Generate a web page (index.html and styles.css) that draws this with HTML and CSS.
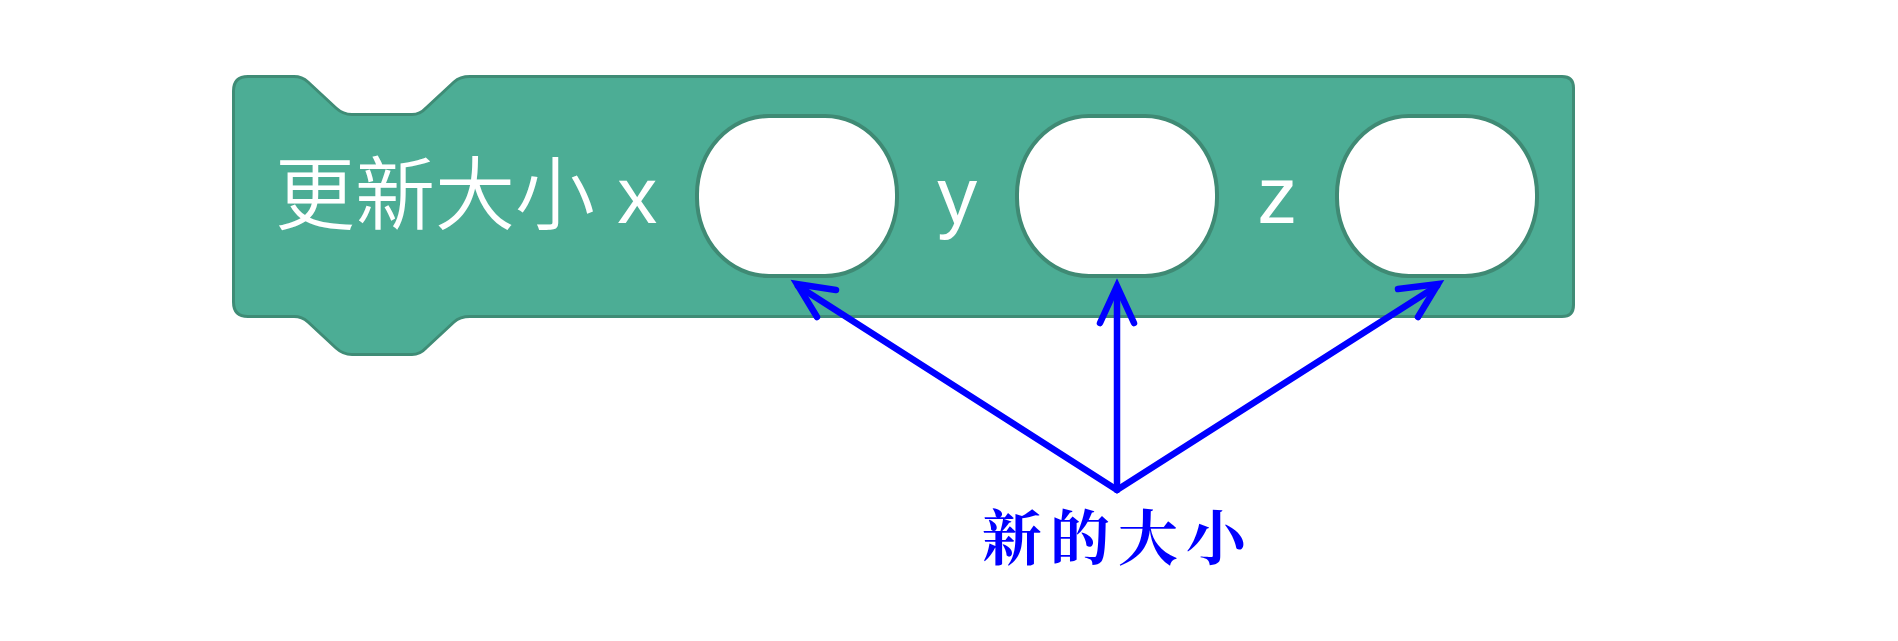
FILE: index.html
```html
<!DOCTYPE html>
<html lang="zh-Hant">
<head>
    <meta charset="UTF-8">
    <title>更新大小</title>
    <link rel="stylesheet" href="styles.css">
</head>
<body>
    <div class="figure">
        <div class="block">
            <svg class="block-shape" width="1343" height="281" viewBox="0 0 1343 281">
                <path d="M1.5 16 Q1.5 1.5 16 1.5 L62 1.5 Q70 1.5 76 7 L104 33 Q111 39.5 120 39.5 L180 39.5 Q188 39.5 194 33 L222 7 Q228 1.5 238 1.5 L1330 1.5 Q1341.5 1.5 1341.5 13 L1341.5 230 Q1341.5 241.5 1330 241.5 L238 241.5 Q228 241.5 222 247 L194 273 Q188 279.5 180 279.5 L120 279.5 Q111 279.5 104 273 L76 247 Q70 241.5 62 241.5 L16 241.5 Q1.5 241.5 1.5 227 Z"
                      fill="#4cad95" stroke="#3f8c76" stroke-width="3"/>
            </svg>
            <div class="block-row">
                <span class="label">更新大小 x</span>
                <span class="slot"></span>
                <span class="label">y</span>
                <span class="slot"></span>
                <span class="label">z</span>
                <span class="slot"></span>
            </div>
        </div>

        <div class="caption">新的大小</div>

        <!-- arrows pointing at the three inputs -->
        <svg class="arrows" width="1898" height="641" viewBox="0 0 1898 641">
            <g fill="none" stroke="#0000ff" stroke-width="6.5" stroke-linecap="round" stroke-linejoin="miter">
                <path d="M798 286 L1117 490 L1437 286"/>
                <path d="M1117 490 L1117 290"/>
                <path d="M836 290 L797 284 L817 317"/>
                <path d="M1100 323 L1117 286 L1134 323"/>
                <path d="M1398 289 L1438 284 L1418 317"/>
            </g>
        </svg>
    </div>
</body>
</html>
```

FILE: styles.css
```css
body {
    margin: 0;
    background-color: white;
    font-family: "Liberation Sans", "Noto Sans CJK TC", sans-serif;
}
.figure {
    position: relative;
    width: 1898px;
    height: 641px;
    padding-top: 75px;
    box-sizing: border-box;
    overflow: hidden;
}
.block {
    position: relative;
    width: 1343px;
    height: 281px;
    margin-left: 232px;
}
.block-shape {
    position: absolute;
    top: 0;
    left: 0;
}
.block-row {
    position: relative;
    display: flex;
    align-items: center;
    gap: 38px;
    height: 242px;
    padding-left: 43px;
    box-sizing: border-box;
}
.label {
    color: white;
    font-size: 80px;
    line-height: 1;
    font-weight: 350;
    white-space: pre;
}
.slot {
    width: 204px;
    height: 164px;
    box-sizing: border-box;
    background-color: white;
    border: 4px solid #3f8a74;
    border-radius: 74px / 80px;
}
.caption {
    width: 400px;
    margin: 148px 0 0 918px;
    text-align: center;
    color: #0000ff;
    font-family: "AR PL UKai TW", "Noto Serif CJK TC", "Noto Sans CJK TC", serif;
    font-size: 60px;
    font-weight: bold;
    letter-spacing: 8px;
    line-height: 1;
}
.arrows {
    position: absolute;
    top: 0;
    left: 0;
    pointer-events: none;
}
```
